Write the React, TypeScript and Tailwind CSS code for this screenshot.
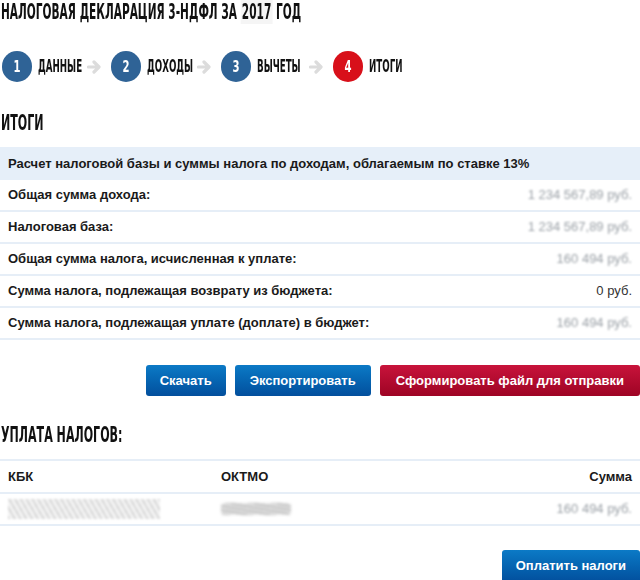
import React from "react";

const cond = { fontFamily: '"DejaVu Sans Condensed", "DejaVu Sans", sans-serif', fontStretch: "condensed" as const };

const steps = [
  { n: 1, label: "ДАННЫЕ", w: "w-[43px]", active: false },
  { n: 2, label: "ДОХОДЫ", w: "w-[44px]", active: false },
  { n: 3, label: "ВЫЧЕТЫ", w: "w-[46px]", active: false },
  { n: 4, label: "ИТОГИ", w: "w-[32px]", active: true },
];

const rows = [
  { label: "Общая сумма дохода:", value: "1 234 567,89 руб.", hidden: true },
  { label: "Налоговая база:", value: "1 234 567,89 руб.", hidden: true },
  { label: "Общая сумма налога, исчисленная к уплате:", value: "160 494 руб.", hidden: true },
  { label: "Сумма налога, подлежащая возврату из бюджета:", value: "0 руб.", hidden: false },
  { label: "Сумма налога, подлежащая уплате (доплате) в бюджет:", value: "160 494 руб.", hidden: true },
];

function Arrow() {
  return (
    <svg width="14" height="14" viewBox="0 0 14 14" className="ml-[6px] mr-[10px]">
      <path d="M1.5 7h10M7 2l5 5-5 5" fill="none" stroke="#dcdcdc" strokeWidth="3.2" strokeLinecap="round" strokeLinejoin="round" />
    </svg>
  );
}

function Hidden({ children }: { children: React.ReactNode }) {
  return <span className="text-[#9aa0a6] blur-[1.2px] select-none">{children}</span>;
}

function Heading({ children, className, size }: { children: React.ReactNode; className: string; size: string }) {
  return (
    <h2 className={`pl-[1px] h-[24px] ${size} leading-[24px] font-bold text-[#111] whitespace-nowrap ${className}`} style={cond}>
      <span className="inline-block origin-left scale-x-[0.56]">{children}</span>
    </h2>
  );
}

export default function App() {
  return (
    <div className="w-[640px] h-[580px] bg-white overflow-hidden text-[#1a1a1a]" style={{ fontFamily: '"Liberation Sans", Arial, sans-serif' }}>
      <Heading className="pt-0" size="text-[21px]">
        НАЛОГОВАЯ ДЕКЛАРАЦИЯ 3-НДФЛ ЗА <span className="bg-[#f5f5f5] px-[2px]">2017</span> ГОД
      </Heading>

      <div className="flex items-center mt-[27px] pl-[2px]">
        {steps.map((s, i) => (
          <React.Fragment key={s.n}>
            <div className="flex items-center">
              <div
                className={`w-[30px] h-[31px] rounded-full flex items-center justify-center text-white text-[16px] font-bold ${s.active ? "bg-[#d8101a]" : "bg-[#2f6396]"}`}
                style={cond}
              >
                <span className="inline-block scale-x-[0.7]">{s.n}</span>
              </div>
              <span className={`ml-[6px] ${s.w} text-[17px] font-bold text-[#111] whitespace-nowrap`} style={cond}>
                <span className="inline-block origin-left scale-x-[0.57]">{s.label}</span>
              </span>
            </div>
            {i < steps.length - 1 && <Arrow />}
          </React.Fragment>
        ))}
      </div>

      <Heading className="mt-[29px]" size="text-[22px]">ИТОГИ</Heading>

      <div className="mt-[12px]">
        <div className="h-[33px] bg-[#e6eff9] px-2 flex items-center text-[13px] font-bold">
          Расчет налоговой базы и суммы налога по доходам, облагаемым по ставке 13%
        </div>
        {rows.map((r) => (
          <div key={r.label} className="h-[32px] border-b-2 border-[#e6eef7] px-2 flex items-center justify-between text-[13px]">
            <span className="font-bold">{r.label}</span>
            {r.hidden ? <Hidden>{r.value}</Hidden> : <span className="text-[#333]">{r.value}</span>}
          </div>
        ))}
      </div>

      <div className="flex justify-end gap-[9px] mt-[25px]">
        <button className="h-[31px] px-[14px] rounded-[3px] bg-gradient-to-b from-[#0c7ac6] to-[#034f9d] text-white text-[13px] font-bold">
          Скачать
        </button>
        <button className="h-[31px] px-[15px] rounded-[3px] bg-gradient-to-b from-[#0c7ac6] to-[#034f9d] text-white text-[13px] font-bold">
          Экспортировать
        </button>
        <button className="h-[31px] px-[16px] rounded-[3px] bg-gradient-to-b from-[#c8133b] to-[#9e0424] text-white text-[13px] font-bold">
          Сформировать файл для отправки
        </button>
      </div>

      <Heading className="mt-[27px]" size="text-[22px]">УПЛАТА НАЛОГОВ:</Heading>

      <div className="mt-[12px] border-t-2 border-[#e6eef7]">
        <div className="h-[33px] border-b-2 border-[#e6eef7] px-2 flex items-center text-[13px] font-bold">
          <span className="w-[213px]">КБК</span>
          <span className="flex-1">ОКТМО</span>
          <span>Сумма</span>
        </div>
        <div className="h-[32px] border-b-2 border-[#e6eef7] px-2 flex items-center text-[13px]">
          <span className="w-[213px]">
            <span
              className="block w-[152px] h-[20px] blur-[1px]"
              style={{ background: "repeating-linear-gradient(60deg, #d9d9d9 0 2px, #f3f3f3 2px 5px)" }}
            />
          </span>
          <span className="flex-1">
            <span
              className="block w-[70px] h-[12px] blur-[1.5px] rounded"
              style={{ background: "repeating-linear-gradient(10deg, #bcbcbc 0 2px, #e8e8e8 2px 4px)" }}
            />
          </span>
          <Hidden>160 494 руб.</Hidden>
        </div>
      </div>

      <div className="flex justify-end mt-[24px]">
        <button className="h-[32px] px-[14px] rounded-[3px] bg-gradient-to-b from-[#0c7ac6] to-[#034f9d] text-white text-[13px] font-bold">
          Оплатить налоги
        </button>
      </div>
    </div>
  );
}
